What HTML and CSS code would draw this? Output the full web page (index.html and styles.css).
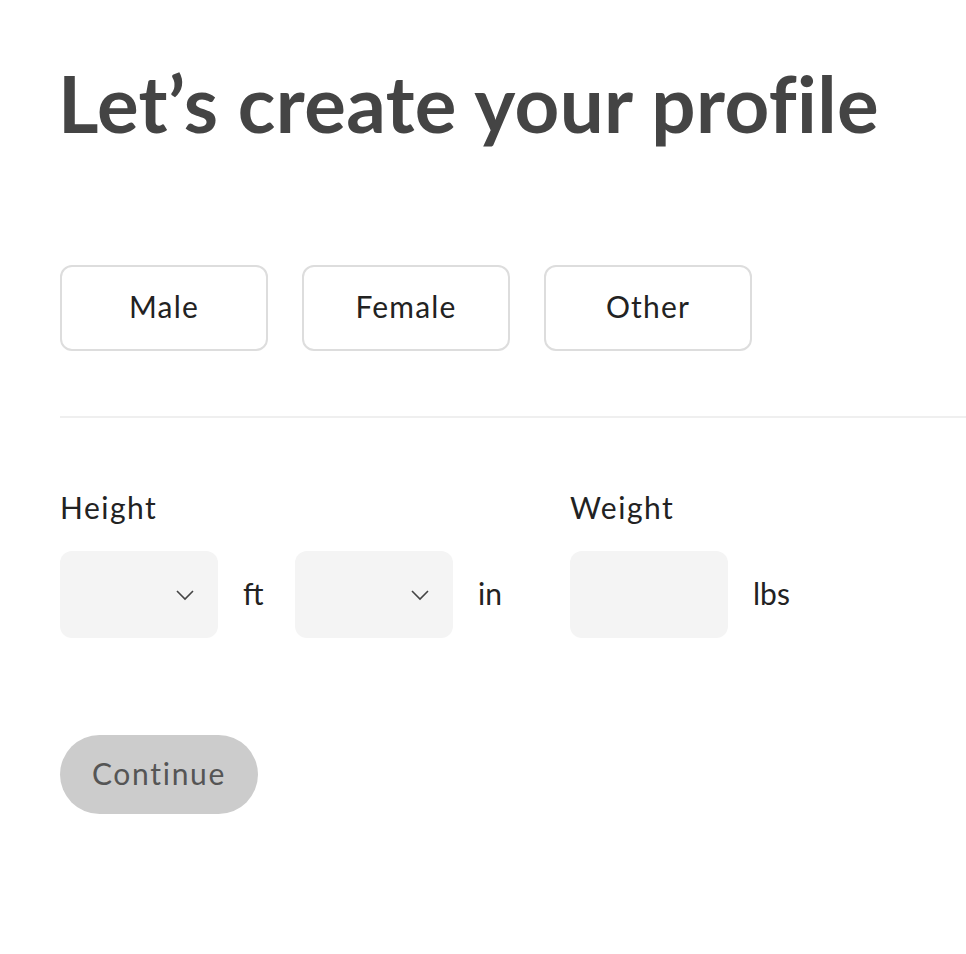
FILE: index.html
```html
<!DOCTYPE html>
<html lang="en">
<head>
    <meta charset="UTF-8">
    <title>Create your profile</title>
    <link rel="stylesheet" href="styles.css">
</head>
<body>
    <main class="profile">
        <h1>Let’s create your profile</h1>

        <!-- Gender -->
        <div class="gender-options">
            <button class="option">Male</button>
            <button class="option">Female</button>
            <button class="option">Other</button>
        </div>

        <hr class="divider">

        <!-- Height and Weight -->
        <div class="measures">
            <div class="field field-height">
                <label>Height</label>
                <div class="field-row">
                    <div class="select-box">
                        <svg width="20" height="12" viewBox="0 0 20 12"><path d="M2 2l8 8 8-8" fill="none" stroke="#444" stroke-width="1.6"/></svg>
                    </div>
                    <span class="unit unit-ft">ft</span>
                    <div class="select-box">
                        <svg width="20" height="12" viewBox="0 0 20 12"><path d="M2 2l8 8 8-8" fill="none" stroke="#444" stroke-width="1.6"/></svg>
                    </div>
                    <span class="unit">in</span>
                </div>
            </div>
            <div class="field">
                <label>Weight</label>
                <div class="field-row">
                    <div class="input-box"></div>
                    <span class="unit">lbs</span>
                </div>
            </div>
        </div>

        <button class="continue">Continue</button>
    </main>
</body>
</html>
```

FILE: styles.css
```css
/* Global */
* {
    margin: 0;
    padding: 0;
    box-sizing: border-box;
    font-family: 'Lato', sans-serif;
}

body {
    background: #fff;
    color: #222;
}

.profile {
    padding: 64px 0 0 60px;
}

h1 {
    font-size: 78px;
    font-weight: 700;
    color: #444;
    letter-spacing: 0.4px;
    line-height: 1;
    margin-left: -2px;
}

/* Gender buttons */
.gender-options {
    display: flex;
    gap: 34px;
    margin-top: 123px;
}

.option {
    width: 208px;
    height: 86px;
    background: #fff;
    border: 2px solid #ddd;
    border-radius: 12px;
    font-size: 30px;
    letter-spacing: 1.2px;
    color: #222;
    padding-bottom: 4px;
    cursor: pointer;
}

.divider {
    border: none;
    border-top: 2px solid #efefef;
    margin-top: 65px;
}

/* Measures */
.measures {
    display: flex;
    margin-top: 71px;
}

.field-height {
    flex: 0 0 510px;
}

.field label {
    display: block;
    font-size: 30px;
    letter-spacing: 1.5px;
    line-height: 36px;
    color: #222;
}

.field-row {
    display: flex;
    align-items: center;
    margin-top: 26px;
}

.select-box, .input-box {
    flex: none;
    width: 158px;
    height: 87px;
    background: #f4f4f4;
    border-radius: 12px;
}

.select-box {
    display: flex;
    align-items: center;
    justify-content: flex-end;
    padding-right: 23px;
}

.unit {
    font-size: 30px;
    margin-left: 25px;
    padding-bottom: 4px;
}

.unit-ft {
    width: 52px;
}

/* Continue */
.continue {
    display: block;
    margin-top: 97px;
    width: 198px;
    height: 79px;
    border: none;
    border-radius: 40px;
    background: #ccc;
    color: #555;
    font-size: 30px;
    letter-spacing: 1.7px;
    padding-bottom: 4px;
    cursor: pointer;
}
```
